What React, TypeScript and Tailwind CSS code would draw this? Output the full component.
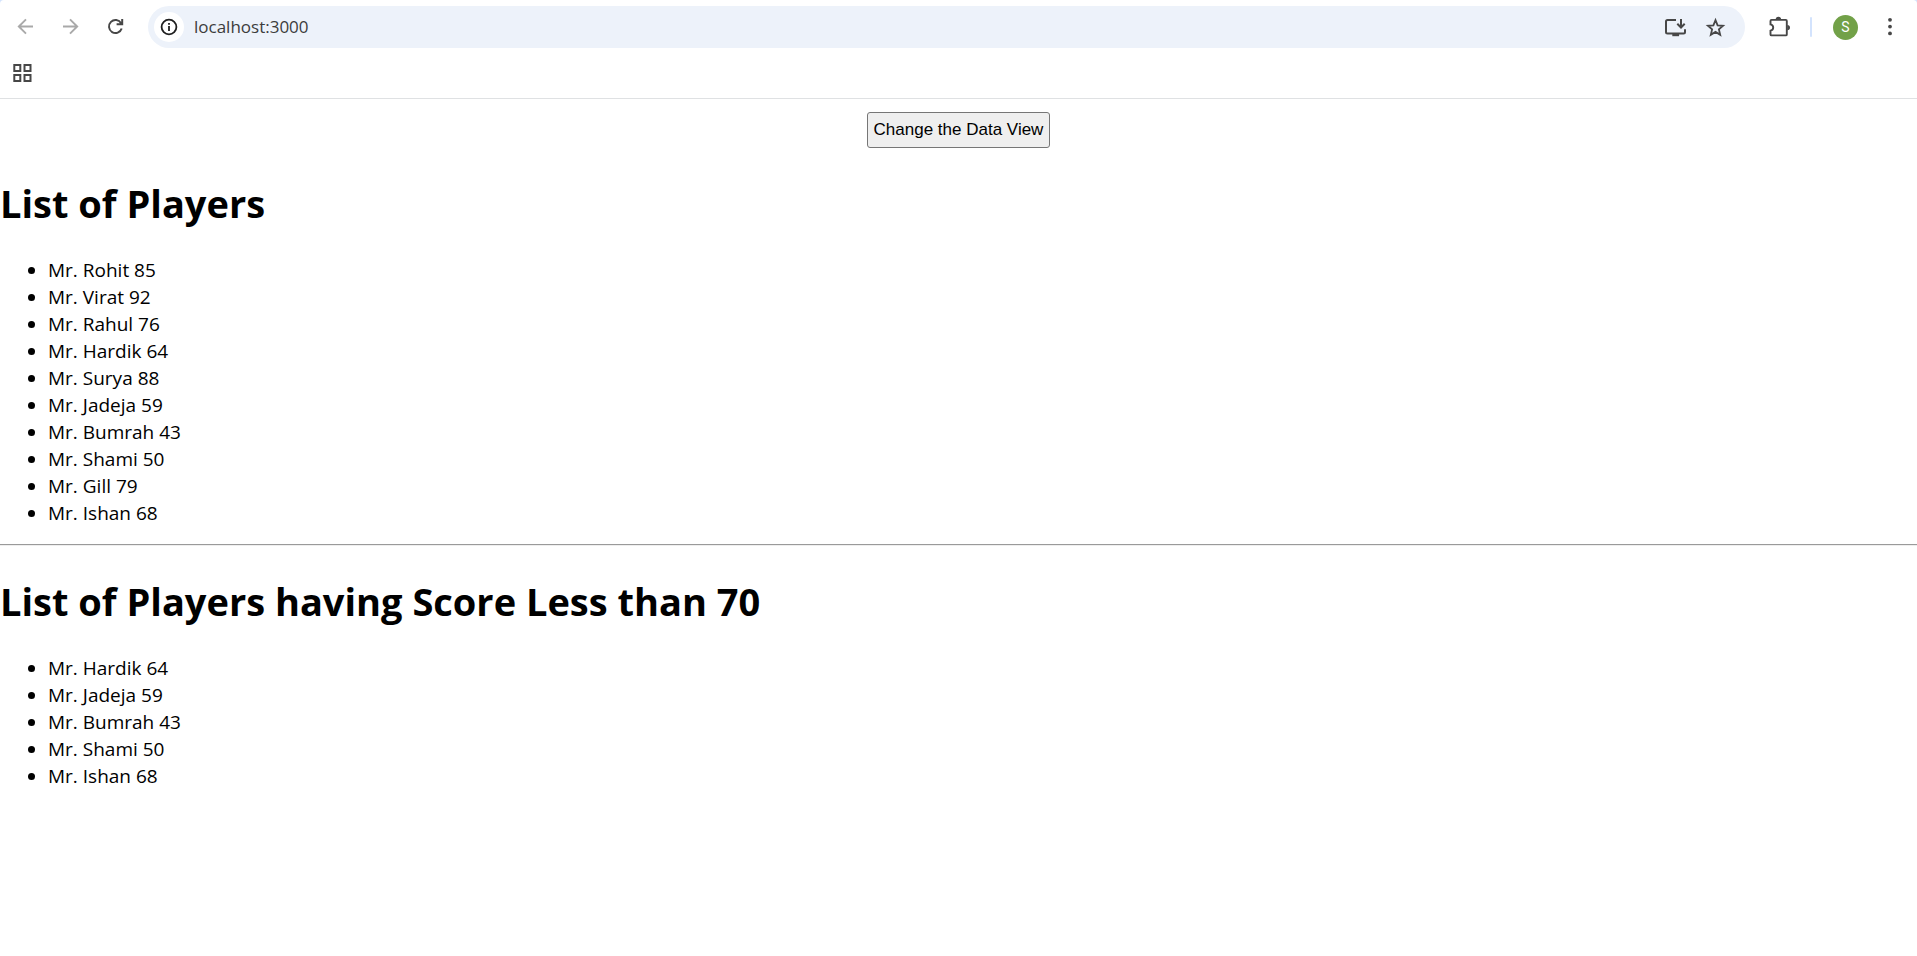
import { useState } from "react";

type Player = { name: string; score: number };

const players: Player[] = [
  { name: "Rohit", score: 85 },
  { name: "Virat", score: 92 },
  { name: "Rahul", score: 76 },
  { name: "Hardik", score: 64 },
  { name: "Surya", score: 88 },
  { name: "Jadeja", score: 59 },
  { name: "Bumrah", score: 43 },
  { name: "Shami", score: 50 },
  { name: "Gill", score: 79 },
  { name: "Ishan", score: 68 },
];

const iconButton = "flex size-6 shrink-0 items-center justify-center";

function PlayerList({ title, items }: { title: string; items: Player[] }) {
  return (
    <section>
      <h1 className="pt-7 pb-[27px] text-[38px] leading-[54px] font-bold">{title}</h1>
      <ul className="list-disc pb-[17px] pl-12 text-[19px] leading-[27px]">
        {items.map((p) => (
          <li key={p.name}>
            Mr. {p.name} {p.score}
          </li>
        ))}
      </ul>
    </section>
  );
}

function Toolbar() {
  const [address, setAddress] = useState("localhost:3000");
  return (
    <div className="bg-[#d3e3fd]">
      <header className="rounded-t border-b border-[#dfe1e3] bg-white pt-[6px]">
        <div className="flex items-center pr-[15px] pl-[14px]">
          <div className="flex gap-[21px]">
            <button aria-label="Back" className={iconButton}>
              <svg width="24" height="24" viewBox="0 0 24 24" fill="none" stroke="#a9a9a9" strokeWidth="1.9">
                <path d="M19 11.5H5.5M12 4.3 4.8 11.5l7.2 7.2" />
              </svg>
            </button>
            <button aria-label="Forward" className={iconButton}>
              <svg width="24" height="24" viewBox="0 0 24 24" fill="none" stroke="#a9a9a9" strokeWidth="1.9">
                <path d="M4 11.5h13.5M11 4.3l7.2 7.2-7.2 7.2" />
              </svg>
            </button>
            <button aria-label="Reload" className={iconButton}>
              <svg width="24" height="24" viewBox="0 0 24 24" fill="none" stroke="#474747" strokeWidth="2">
                <path d="M17.7 13.5a6.5 6.5 0 1 1-.6-5.3l.8 1.2M18.2 4v5.3h-5.6" />
              </svg>
            </button>
          </div>
          <div className="ml-[20px] flex h-[42px] flex-1 items-center rounded-full bg-[#edf2fa] pr-[17px] pl-[6px]">
            <button
              aria-label="View site information"
              className="flex size-[30px] items-center justify-center rounded-full bg-white"
            >
              <svg width="18" height="18" viewBox="0 0 18 18" fill="none" stroke="#1f1f1f" strokeWidth="1.8">
                <circle cx="9" cy="9" r="7.4" />
                <path d="M9 8v5M9 5v1.8" />
              </svg>
            </button>
            <input
              aria-label="Address"
              value={address}
              onChange={(e) => setAddress(e.target.value)}
              className="ml-[10px] min-w-0 flex-1 bg-transparent text-[17px] leading-6 text-[#3c3c3c] outline-none"
            />
            <div className="flex items-center gap-4">
              <button aria-label="Install app" className={iconButton}>
                <svg width="24" height="24" viewBox="0 0 24 24" fill="none" stroke="#474747" strokeWidth="2">
                  <path d="M12 4.9H3.5a1.5 1.5 0 0 0-1.5 1.5v10.5a1.5 1.5 0 0 0 1.5 1.5h16a1.5 1.5 0 0 0 1.5-1.5v-2.6M17 4v8M13.3 8.8l3.7 3.7 3.7-3.7" />
                  <path d="M8.3 20h6.8" strokeWidth="2.4" />
                </svg>
              </button>
              <button aria-label="Bookmark this tab" className={iconButton}>
                <svg width="24" height="24" viewBox="0 0 24 24" fill="none" stroke="#474747" strokeWidth="1.8">
                  <path d="m11.5 5.2 2.1 5.1 5.5.5-4.2 3.6 1.3 5.4-4.7-2.9-4.7 2.9 1.3-5.4-4.2-3.6 5.5-.5z" />
                </svg>
              </button>
            </div>
          </div>
          <button aria-label="Extensions" className={`ml-[22px] ${iconButton}`}>
            <svg width="24" height="24" viewBox="0 0 24 24" fill="none" stroke="#474747" strokeWidth="1.9">
              <path d="M4.5 4.9h14.3a1 1 0 0 1 1 1v13.5a1 1 0 0 1-1 1H4.5a1 1 0 0 1-1-1v-3.6c3.6-.8 3.6-5.6 0-6.4V5.9a1 1 0 0 1 1-1z" />
              <path d="M8.7 4.4a2.7 2.7 0 0 1 5.4 0zM20.3 9.9a2.7 2.7 0 0 1 0 5.4z" fill="#474747" stroke="none" />
            </svg>
          </button>
          <div className="ml-[19px] h-5 w-[2px] rounded-full bg-[#d3e3fd]" />
          <button
            aria-label="Profile"
            className="ml-[21px] flex size-[25px] items-center justify-center rounded-full bg-[#72a148] font-[Roboto,sans-serif] text-[14px] text-white"
          >
            S
          </button>
          <button aria-label="Menu" className={`ml-5 ${iconButton}`}>
            <svg width="24" height="24" viewBox="0 0 24 24" fill="#474747">
              <circle cx="12" cy="4.8" r="1.9" />
              <circle cx="12" cy="11.6" r="1.9" />
              <circle cx="12" cy="18.4" r="1.9" />
            </svg>
          </button>
        </div>
        <nav aria-label="Bookmarks" className="flex h-[50px] items-center px-[11px]">
          <button aria-label="Apps" className={iconButton}>
            <svg width="24" height="24" viewBox="0 0 24 24" fill="none" stroke="#474747" strokeWidth="2">
              <path d="M3.3 4h6v6h-6zM13.5 4h6v6h-6zM3.3 14h6v6h-6zM13.5 14h6v6h-6z" />
            </svg>
          </button>
        </nav>
      </header>
    </div>
  );
}

export default function App() {
  const [filtered, setFiltered] = useState(true);
  return (
    <div className="min-h-screen bg-white font-['Open_Sans','Noto_Sans',sans-serif] text-black">
      <Toolbar />
      <main className="pt-[13px]">
        <div className="flex justify-center">
          <button
            onClick={() => setFiltered(!filtered)}
            className="h-9 rounded-[3px] border border-[#767676] bg-[#efefef] px-[6px] font-['Liberation_Sans',Arial,sans-serif] text-[17px]"
          >
            Change the Data View
          </button>
        </div>
        <PlayerList title="List of Players" items={players} />
        {filtered && (
          <>
            <hr className="border-t border-b border-t-[#9a9a9a] border-b-[#eeeeee]" />
            <PlayerList
              title="List of Players having Score Less than 70"
              items={players.filter((p) => p.score < 70)}
            />
          </>
        )}
      </main>
    </div>
  );
}
